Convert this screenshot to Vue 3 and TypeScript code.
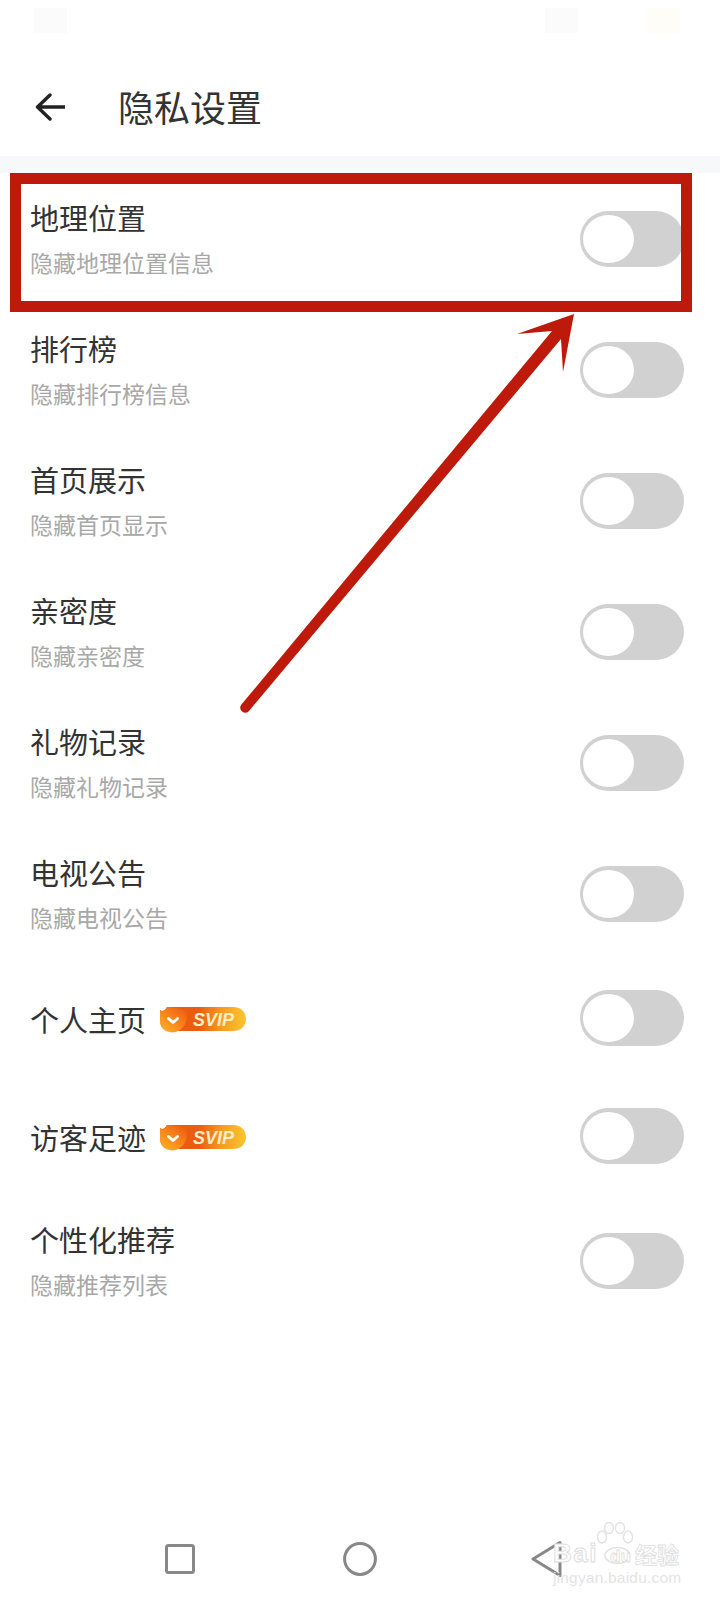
<script setup lang="ts">
interface Row {
  title: string
  desc?: string
  vip?: boolean
}

const rows: Row[] = [
  { title: '地理位置', desc: '隐藏地理位置信息' },
  { title: '排行榜', desc: '隐藏排行榜信息' },
  { title: '首页展示', desc: '隐藏首页显示' },
  { title: '亲密度', desc: '隐藏亲密度' },
  { title: '礼物记录', desc: '隐藏礼物记录' },
  { title: '电视公告', desc: '隐藏电视公告' },
  { title: '个人主页', vip: true },
  { title: '访客足迹', vip: true },
  { title: '个性化推荐', desc: '隐藏推荐列表' },
]
</script>

<template>
  <div class="page">
    <div class="status">
      <span class="blur" />
      <span class="status-right">
        <span class="blur" />
        <span class="blur warm" />
      </span>
    </div>

    <header class="toolbar">
      <svg class="back" width="30" height="28" viewBox="0 0 30 28">
        <path d="M15 2 L2.5 14 L15 26 M3 14 H30" fill="none" stroke="#222" stroke-width="3.4" stroke-linecap="round" stroke-linejoin="round" />
      </svg>
      <h1 class="title">隐私设置</h1>
    </header>

    <div class="band" />

    <ul class="list">
      <li v-for="row in rows" :key="row.title" :class="['row', { short: !row.desc }]">
        <div class="text">
          <div class="name">
            <span>{{ row.title }}</span>
            <svg v-if="row.vip" class="badge" width="87" height="27" viewBox="0 0 87 27">
              <defs>
                <linearGradient id="svipBody" x1="0" y1="0" x2="1" y2="0">
                  <stop offset="0" stop-color="#ec5c10" />
                  <stop offset="0.45" stop-color="#ea5c0f" />
                  <stop offset="0.72" stop-color="#f59c22" />
                  <stop offset="1" stop-color="#fcc531" />
                </linearGradient>
                <linearGradient id="svipLeaf" x1="0.9" y1="0" x2="0.1" y2="1">
                  <stop offset="0" stop-color="#ee5a10" />
                  <stop offset="0.55" stop-color="#f98a1a" />
                  <stop offset="1" stop-color="#fcb22a" />
                </linearGradient>
              </defs>
              <path d="M8 1 H74 C82 1 87 6 87 13 C87 20 82 25 74 25 H14 C5 26 1 21 1 14 V4 C3 6 6 5 8 1 Z" fill="url(#svipBody)" />
              <path d="M1 4 C3 6 6 5 8 1 C14 1 22 2 27 5 C30 14 25 26 13 26.5 C5 26 1 21 1 14 Z" fill="url(#svipLeaf)" />
              <path d="M9.5 12.5 L14 16.5 L18.5 12.5" fill="none" stroke="#fff" stroke-width="3" stroke-linecap="round" stroke-linejoin="round" />
              <text x="34" y="19.5" class="badge-text">SVIP</text>
            </svg>
          </div>
          <div v-if="row.desc" class="desc">{{ row.desc }}</div>
        </div>
        <span class="toggle"><span class="knob" /></span>
      </li>
    </ul>

    <nav class="nav">
      <svg class="nav-square" width="30" height="30" viewBox="0 0 30 30">
        <rect x="1.5" y="1.5" width="27" height="27" rx="2" fill="none" stroke="#888" stroke-width="3" />
      </svg>
      <svg class="nav-circle" width="34" height="34" viewBox="0 0 34 34">
        <circle cx="17" cy="17" r="15.4" fill="none" stroke="#888" stroke-width="3" />
      </svg>
      <svg class="nav-back" width="32" height="36" viewBox="0 0 32 36">
        <path d="M29 1.5 L2 18 L29 34.5 Z" fill="none" stroke="#888" stroke-width="3" stroke-linejoin="round" />
      </svg>
    </nav>

    <!-- red annotation drawn over the screenshot -->
    <div class="mark" />
    <svg class="arrow" width="720" height="1600" viewBox="0 0 720 1600">
      <path d="M574 314 L517 334 L552 331 L241.2 704.8 A5 5 0 0 0 248.8 711.2 L561 339 L563 372 Z" fill="#bd1a0c" />
    </svg>

    <div class="watermark">
      <svg class="paw" width="38" height="44" viewBox="0 0 38 44">
        <g fill="#fff" stroke="#e2e2e2" stroke-width="1.4">
          <ellipse cx="6" cy="15" rx="4.5" ry="6" />
          <ellipse cx="13" cy="6" rx="4.5" ry="5.5" />
          <ellipse cx="24" cy="6" rx="4.5" ry="5.5" />
          <ellipse cx="32" cy="15" rx="4.5" ry="6" />
          <ellipse cx="21.5" cy="33.5" rx="12.5" ry="8" />
        </g>
      </svg>
      <div class="wm-bai">Bai</div>
      <div class="wm-du">du</div>
      <div class="wm-cn">经验</div>
      <div class="wm-url">jingyan.baidu.com</div>
    </div>
  </div>
</template>

<style scoped>
.page {
  position: relative;
  display: flex;
  flex-direction: column;
  width: 720px;
  height: 1600px;
  overflow: hidden;
  background: #fff;
  font-family: "Noto Sans CJK SC", "Noto Sans", sans-serif;
}

.status {
  display: flex;
  justify-content: space-between;
  height: 58px;
  padding: 8px 40px 0 34px;
  box-sizing: border-box;
}

.status-right {
  display: flex;
  gap: 69px;
}

.blur {
  display: block;
  width: 33px;
  height: 25px;
  background: #fbfbfb;
}

.blur.warm {
  background: #fffdf7;
}

.toolbar {
  display: flex;
  align-items: center;
  height: 98px;
  padding-left: 35px;
}

.back {
  margin-right: 53px;
}

.title {
  margin: 0 0 3px;
  font-size: 36px;
  font-weight: 400;
  line-height: 44px;
  color: #333;
}

.band {
  height: 17px;
  background: #f7f8fa;
}

.list {
  margin: 0;
  padding: 0;
  list-style: none;
}

.row {
  display: flex;
  align-items: center;
  justify-content: space-between;
  height: 131px;
  padding: 0 36px 0 30px;
}

.row.short {
  height: 118px;
}

.text {
  padding-bottom: 4px;
}

.short .text {
  padding: 1px 0 0;
}

.name {
  display: flex;
  align-items: center;
  height: 40px;
  font-size: 29px;
  line-height: 40px;
  color: #333;
}

.badge {
  margin: 2px 0 0 13px;
}

.badge-text {
  font-family: "Liberation Sans", sans-serif;
  font-size: 18px;
  font-style: italic;
  font-weight: 700;
  fill: #ffecc9;
}

.desc {
  margin-top: 11px;
  font-size: 23px;
  line-height: 28px;
  color: #a8a8a8;
}

.toggle {
  display: block;
  flex-shrink: 0;
  width: 104px;
  height: 56px;
  border-radius: 28px;
  background: #d1d1d1;
}

.knob {
  display: block;
  width: 51px;
  height: 48px;
  margin: 4px 0 0 3px;
  border-radius: 50%;
  background: #fff;
}

.nav {
  display: flex;
  align-items: center;
  margin-top: auto;
  height: 74px;
  padding: 0 0 9px 165px;
  box-sizing: border-box;
}

.nav-circle {
  margin-left: 148px;
}

.nav-back {
  margin-left: 154px;
}

.mark {
  position: absolute;
  left: 10px;
  top: 173px;
  width: 682px;
  height: 139px;
  box-sizing: border-box;
  border: 11px solid #bd1a0c;
}

.arrow {
  position: absolute;
  left: 0;
  top: 0;
  pointer-events: none;
}

.watermark {
  position: absolute;
  left: 553px;
  top: 1522px;
  width: 128px;
  height: 62px;
  color: #fff;
  font-family: "Liberation Sans", sans-serif;
  white-space: nowrap;
}

.paw {
  position: absolute;
  left: 43px;
  top: 0;
}

.wm-bai {
  position: absolute;
  left: 0;
  top: 18px;
  font-size: 26px;
  font-weight: 700;
  line-height: 26px;
  letter-spacing: 1.5px;
  -webkit-text-stroke: 1px #dedede;
}

.wm-du {
  position: absolute;
  left: 57px;
  top: 26px;
  font-size: 17px;
  font-weight: 700;
  line-height: 18px;
  -webkit-text-stroke: 0.8px #dedede;
}

.wm-cn {
  position: absolute;
  left: 82px;
  top: 18px;
  font-family: "Noto Sans CJK SC", sans-serif;
  font-size: 22px;
  font-weight: 700;
  line-height: 26px;
  -webkit-text-stroke: 0.8px #dedede;
}

.wm-url {
  position: absolute;
  left: 0;
  top: 49px;
  font-size: 15.5px;
  line-height: 14px;
  letter-spacing: 0.2px;
  color: #e4e4e4;
}
</style>
